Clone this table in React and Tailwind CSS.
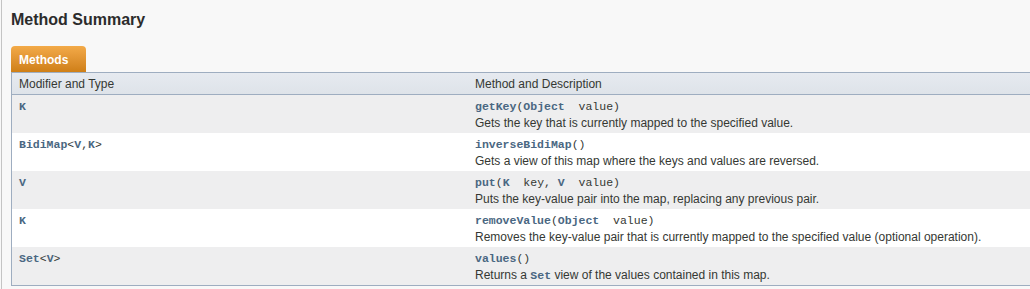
import React from "react";

const rows = [
  {
    type: [{ t: "K", link: true }],
    sig: [
      { t: "getKey", link: true },
      { t: "(" },
      { t: "Object", link: true },
      { t: "  value)" },
    ],
    desc: ["Gets the key that is currently mapped to the specified value."],
  },
  {
    type: [
      { t: "BidiMap", link: true },
      { t: "<" },
      { t: "V", link: true },
      { t: "," },
      { t: "K", link: true },
      { t: ">" },
    ],
    sig: [{ t: "inverseBidiMap", link: true }, { t: "()" }],
    desc: ["Gets a view of this map where the keys and values are reversed."],
  },
  {
    type: [{ t: "V", link: true }],
    sig: [
      { t: "put", link: true },
      { t: "(" },
      { t: "K", link: true },
      { t: "  key, " },
      { t: "V", link: true },
      { t: "  value)" },
    ],
    desc: ["Puts the key-value pair into the map, replacing any previous pair."],
  },
  {
    type: [{ t: "K", link: true }],
    sig: [
      { t: "removeValue", link: true },
      { t: "(" },
      { t: "Object", link: true },
      { t: "  value)" },
    ],
    desc: [
      "Removes the key-value pair that is currently mapped to the specified value (optional operation).",
    ],
  },
  {
    type: [
      { t: "Set", link: true },
      { t: "<" },
      { t: "V", link: true },
      { t: ">" },
    ],
    sig: [{ t: "values", link: true }, { t: "()" }],
    desc: ["Returns a ", { code: "Set" }, " view of the values contained in this map."],
  },
];

const mono = "font-['Liberation_Mono','DejaVu_Sans_Mono',monospace] text-[11.5px]";

function Code({ parts }) {
  return (
    <span className={`${mono} whitespace-pre`}>
      {parts.map((p, i) =>
        p.link ? (
          <span key={i} className="font-bold text-[#4a6782]">
            {p.t}
          </span>
        ) : (
          <span key={i} className="text-[#353833]">
            {p.t}
          </span>
        )
      )}
    </span>
  );
}

export default function App() {
  return (
    <div className="h-[289px] w-full overflow-hidden bg-[#f8f8f8] font-['Liberation_Sans',Arial,sans-serif]">
      <div className="ml-px h-full border-l border-[#c4c4c4] pl-[9px]">
        <h3 className="pt-[10px] text-[16px] leading-[20px] font-bold text-[#2c2c2c]">
          Method Summary
        </h3>
        <div className="mt-[16px] flex">
          <div className="h-[26px] w-[75px] rounded-t-[4px] bg-gradient-to-b from-[#f3aa48] to-[#cf7f16] pl-[8px] pt-[7px] text-[12px] leading-[14px] font-bold text-white">
            Methods
          </div>
        </div>
        <div className="w-[1040px] border border-[#9eadc0] border-r-0">
          <div className="flex h-[22px] items-center border-b border-[#9eadc0] bg-gradient-to-b from-[#e6eaf0] to-[#dee3e9] text-[12px] text-[#353833]">
            <div className="w-[455px] pl-[7px]">Modifier and Type</div>
            <div className="pl-[8px]">Method and Description</div>
          </div>
          {rows.map((r, i) => (
            <div
              key={i}
              className={`flex h-[38px] ${i % 2 === 0 ? "bg-[#eeeeef]" : "bg-white"}`}
            >
              <div className="w-[455px] pl-[7px] pt-[2px] leading-[16px]">
                <Code parts={r.type} />
              </div>
              <div className="pl-[8px] pt-[2px]">
                <div className="leading-[16px]">
                  <Code parts={r.sig} />
                </div>
                <div className="text-[12px] leading-[16px] text-[#353833]">
                  {r.desc.map((d, j) =>
                    typeof d === "string" ? (
                      <span key={j}>{d}</span>
                    ) : (
                      <span key={j} className={`${mono} font-bold text-[#4a6782]`}>
                        {d.code}
                      </span>
                    )
                  )}
                </div>
              </div>
            </div>
          ))}
        </div>
      </div>
    </div>
  );
}
